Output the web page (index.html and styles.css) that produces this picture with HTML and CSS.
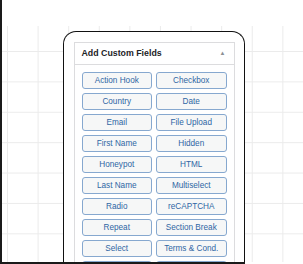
FILE: index.html
```html
<!DOCTYPE html>
<html lang="en">
<head>
    <meta charset="UTF-8">
    <title>Add Custom Fields</title>
    <link rel="stylesheet" href="styles.css">
</head>
<body>
    <div class="scene">
        <div class="top-space"></div>
        <div class="board">
            <div class="frame">
                <div class="panel">
                    <div class="panel-head">
                        <span class="panel-title">Add Custom Fields</span>
                        <span class="panel-toggle">&#9650;</span>
                    </div>
                    <div class="field-list">
                        <button class="field-btn">Action Hook</button>
                        <button class="field-btn">Checkbox</button>
                        <button class="field-btn">Country</button>
                        <button class="field-btn">Date</button>
                        <button class="field-btn">Email</button>
                        <button class="field-btn">File Upload</button>
                        <button class="field-btn">First Name</button>
                        <button class="field-btn">Hidden</button>
                        <button class="field-btn">Honeypot</button>
                        <button class="field-btn">HTML</button>
                        <button class="field-btn">Last Name</button>
                        <button class="field-btn">Multiselect</button>
                        <button class="field-btn">Radio</button>
                        <button class="field-btn">reCAPTCHA</button>
                        <button class="field-btn">Repeat</button>
                        <button class="field-btn">Section Break</button>
                        <button class="field-btn">Select</button>
                        <button class="field-btn">Terms &amp; Cond.</button>
                        <button class="field-btn"></button>
                        <button class="field-btn"></button>
                    </div>
                </div>
            </div>
        </div>
        <div class="base-line"></div>
    </div>
</body>
</html>
```

FILE: styles.css
```css
body {
    margin: 0;
    background: #fff;
    font-family: 'Liberation Sans', Arial, sans-serif;
}

.scene {
    width: 301px;
    height: 264px;
    border-left: 2px solid #1a1a1a;
    display: flex;
    flex-direction: column;
    overflow: hidden;
}

.top-space {
    height: 26px;
    flex-shrink: 0;
}

.board {
    height: 236px;
    flex-shrink: 0;
    padding: 5px 0 0 61px;
    box-sizing: border-box;
    overflow: hidden;
    background-color: #fff;
    background-image:
        linear-gradient(to right, #ebebeb 1px, transparent 1px),
        linear-gradient(to bottom, #ebebeb 1px, transparent 1px);
    background-size: 30.6px 30.4px;
    background-position: 5px 25px;
}

.frame {
    width: 182px;
    height: 100%;
    box-sizing: border-box;
    border: 1.5px solid #111;
    border-bottom: none;
    border-radius: 13px 13px 0 0;
    background: #fff;
    padding: 9.5px 9.5px 0;
    overflow: hidden;
}

.panel {
    border: 1px solid #dcdcde;
    border-bottom: none;
    height: 100%;
    box-sizing: border-box;
}

.panel-head {
    height: 20px;
    border-bottom: 1px solid #dcdcde;
    display: flex;
    align-items: center;
    justify-content: space-between;
    padding: 0 8px 1px 7px;
}

.panel-title {
    font-size: 8.8px;
    font-weight: 700;
    color: #1d2327;
}

.panel-toggle {
    font-size: 6px;
    color: #8c8f94;
}

.field-list {
    display: grid;
    grid-template-columns: 70.5px 70.5px;
    column-gap: 4px;
    row-gap: 3.5px;
    padding: 7px 0 0 7px;
}

.field-btn {
    height: 17.5px;
    padding: 0;
    border: 1px solid #86a8cf;
    border-radius: 3px;
    background: #f6f7f7;
    color: #2f66a4;
    font-family: 'Liberation Sans', Arial, sans-serif;
    font-size: 8.2px;
    text-align: center;
}

.base-line {
    width: 243px;
    height: 2px;
    background: #1a1a1a;
    flex-shrink: 0;
}
```
